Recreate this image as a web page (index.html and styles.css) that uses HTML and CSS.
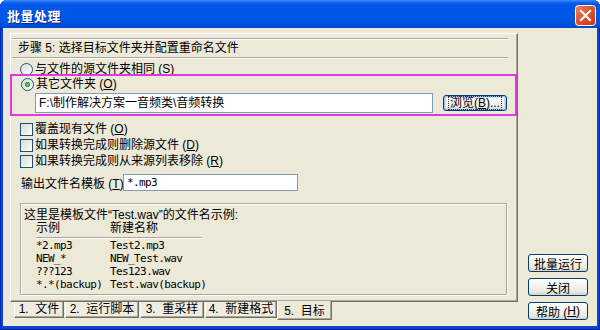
FILE: index.html
```html
<!DOCTYPE html>
<html lang="zh-CN">
<head>
    <meta charset="UTF-8">
    <meta name="viewport" content="width=device-width, initial-scale=1.0">
    <title>批量处理</title>
    <link rel="stylesheet" href="styles.css">
</head>
<body>
    <div class="window">
        <div class="titlebar">
            <span class="title">批量处理</span>
            <span class="close-btn">
                <svg width="21" height="21" viewBox="0 0 21 21">
                    <defs>
                        <linearGradient id="red" x1="0" y1="0" x2="1" y2="1">
                            <stop offset="0" stop-color="#F0896A"/>
                            <stop offset="0.45" stop-color="#E0552F"/>
                            <stop offset="1" stop-color="#C4371A"/>
                        </linearGradient>
                    </defs>
                    <rect x="0.5" y="0.5" width="20" height="20" rx="3" fill="url(#red)" stroke="#fff"/>
                    <path d="M6 6 L15 15 M15 6 L6 15" stroke="#fff" stroke-width="2.2" stroke-linecap="square"/>
                </svg>
            </span>
        </div>

        <div class="client">
            <div class="main">
                <div class="pane">
                    <div class="step">步骤 5: 选择目标文件夹并配置重命名文件</div>

                    <div class="opt first"><span class="radio"></span>与文件的源文件夹相同 (<u>S</u>)</div>

                    <!-- 高亮框 -->
                    <div class="highlight">
                        <div class="opt"><span class="radio checked"></span>其它文件夹 (<u>O</u>)</div>
                        <div class="path-row">
                            <div class="field path">F:\制作解决方案一音频类\音频转换</div>
                            <button class="btn browse"><span class="focus">浏览(<u>B</u>)...</span></button>
                        </div>
                    </div>

                    <div class="checks">
                        <div class="opt"><span class="check"></span>覆盖现有文件 (<u>O</u>)</div>
                        <div class="opt"><span class="check"></span>如果转换完成则删除源文件 (<u>D</u>)</div>
                        <div class="opt"><span class="check"></span>如果转换完成则从来源列表移除 (<u>R</u>)</div>
                    </div>

                    <div class="tpl-row">
                        <span class="tpl-label">输出文件名模板 (<u>T</u>)</span>
                        <div class="field tpl">*.mp3</div>
                    </div>

                    <div class="group">
                        <div class="group-title">这里是模板文件“Test.wav”的文件名示例:</div>
                        <div class="ex-head"><span>示例</span><span>新建名称</span></div>
                        <div class="ex-line"></div>
                        <div class="ex-row"><span>*2.mp3</span><span>Test2.mp3</span></div>
                        <div class="ex-row"><span>NEW_*</span><span>NEW_Test.wav</span></div>
                        <div class="ex-row"><span>???123</span><span>Tes123.wav</span></div>
                        <div class="ex-row"><span>*.*(backup)</span><span>Test.wav(backup)</span></div>
                    </div>
                </div>

                <div class="tabs">
                    <div class="tab t1">1.&nbsp; 文件</div>
                    <div class="tab t2">2.&nbsp; 运行脚本</div>
                    <div class="tab t3">3.&nbsp; 重采样</div>
                    <div class="tab t4">4.&nbsp; 新建格式</div>
                    <div class="tab t5 active">5.&nbsp; 目标</div>
                </div>
            </div>

            <div class="side">
                <button class="btn">批量运行</button>
                <button class="btn">关闭</button>
                <button class="btn">帮助 (<u>H</u>)</button>
            </div>
        </div>
    </div>
</body>
</html>
```

FILE: styles.css
```css
body {
    margin: 0;
    background: #fff;
    font-family: "Liberation Sans", "Noto Sans CJK SC", sans-serif;
    font-size: 12px;
    color: #000;
}

.window {
    width: 600px;
    height: 330px;
    display: flex;
    flex-direction: column;
    background: #0845D6;
    border-radius: 7px 7px 0 0;
    overflow: hidden;
    box-shadow: inset 1px 0 #0025B0, inset -1px 0 #0025B0, inset 0 -1px #001A8C;
}

.titlebar {
    flex: none;
    height: 28px;
    display: flex;
    align-items: center;
    justify-content: space-between;
    padding: 2px 4px 0 7px;
    box-sizing: border-box;
    background: linear-gradient(180deg, #3D8DF5 0, #0B5CEC 3px, #0056E6 6px, #0058EA 16px, #0052DE 24px, #0046C8 28px);
}

.title {
    color: #fff;
    font-family: "Noto Sans CJK SC", sans-serif;
    font-weight: bold;
    font-size: 13px;
    letter-spacing: 0.5px;
    text-shadow: 1px 1px #0A2A8C;
}

.close-btn svg {
    display: block;
}

.client {
    flex: 1;
    margin: 0 3px 4px 3px;
    background: #ECE9D8;
    display: flex;
}

.main {
    width: 508px;
    margin: 5px 0 0 7px;
}

.pane {
    height: 269px;
    box-sizing: border-box;
    border: 1px solid;
    border-color: #fff #716F64 #716F64 #fff;
    box-shadow: inset -1px -1px #ACA899;
    padding-top: 4px;
}

.step {
    margin: 0 9px 0 1px;
    height: 18px;
    line-height: 18px;
    padding-left: 6px;
    border-top: 1px solid #ACA899;
    border-bottom: 1px solid #ACA899;
    box-shadow: inset 0 1px #fff, 0 1px #fff;
}

.opt {
    display: flex;
    align-items: center;
    height: 16px;
    line-height: 13px;
    padding-left: 9px;
    white-space: nowrap;
}

.opt.first {
    height: 13px;
    margin-top: 5px;
}

u {
    text-underline-offset: 1px;
}

.radio,
.check {
    flex: none;
    width: 13px;
    height: 13px;
    box-sizing: border-box;
    border: 1px solid #1C5180;
    background: linear-gradient(135deg, #DCDBD3 0%, #F4F4F0 70%, #fff 100%);
    margin-right: 2px;
}

.radio {
    border-radius: 50%;
}

.radio.checked {
    background: radial-gradient(circle at 50% 50%, #6CE068 0, #21A121 2.4px, transparent 3px),
                linear-gradient(135deg, #DCDBD3 0%, #F4F4F0 70%, #fff 100%);
}

/* kotak magenta di atas panel */
.highlight {
    position: relative;
    margin: -2px 0 0 -1px;
    border: 2px solid #DD3ADD;
    height: 38px;
}

.path-row {
    display: flex;
    align-items: center;
    gap: 10px;
    margin-top: 1px;
    padding-left: 23px;
}

.field {
    box-sizing: border-box;
    border: 1px solid #7F9DB9;
    background: #fff;
    padding-left: 3px;
    white-space: nowrap;
}

.path {
    width: 398px;
    height: 20px;
    line-height: 18px;
}

.btn {
    box-sizing: border-box;
    padding: 0;
    font-family: inherit;
    font-size: 12px;
    color: #000;
    border: 1px solid #003C74;
    border-radius: 3px;
    background: linear-gradient(180deg, #fff 0%, #F6F5F1 35%, #ECEBE5 75%, #D8D3C8 100%);
    display: flex;
    align-items: center;
    justify-content: center;
    white-space: nowrap;
}

.browse {
    width: 64px;
    height: 16px;
    box-shadow: inset 0 0 0 1px #A6C2F0, inset 0 0 0 2px #CEDCF6;
}

.browse .focus {
    outline: 1px dotted #333;
    line-height: 10px;
    padding: 1px 1px;
}

.checks {
    margin-top: 5px;
}

.tpl-row {
    display: flex;
    align-items: center;
    height: 17px;
    margin-top: 5px;
    padding-left: 10px;
}

.tpl-label {
    width: 102px;
    white-space: nowrap;
}

.tpl {
    width: 175px;
    height: 17px;
    line-height: 15px;
    font-family: "DejaVu Sans Mono", monospace;
    font-size: 11px;
    letter-spacing: -0.6px;
}

.group {
    margin: 12px 0 0 9px;
    width: 487px;
    height: 92px;
    box-sizing: border-box;
    border: 1px solid #ACA899;
    box-shadow: 1px 1px 0 #fff, inset 1px 1px 0 #fff;
    padding: 5px 0 0 3px;
}

.group-title,
.ex-head {
    height: 13px;
    line-height: 13px;
    white-space: nowrap;
}

.ex-head,
.ex-row {
    display: flex;
    padding-left: 12px;
}

.ex-head span:first-child,
.ex-row span:first-child {
    width: 74px;
}

.ex-line {
    margin: 2px 0 1px 12px;
    width: 166px;
    height: 1px;
    background: #ACA899;
    box-shadow: 0 1px #fff;
}

.ex-row {
    height: 13px;
    line-height: 13px;
    font-family: "DejaVu Sans Mono", monospace;
    font-size: 11px;
    letter-spacing: -0.6px;
    white-space: pre;
}

.tabs {
    display: flex;
    align-items: flex-start;
    gap: 1px;
    padding-left: 4px;
}

.tab {
    height: 16px;
    box-sizing: border-box;
    line-height: 15px;
    text-align: center;
    white-space: nowrap;
    border-left: 1px solid #fff;
    border-right: 1px solid #716F64;
    border-bottom: 1px solid #716F64;
    box-shadow: inset -1px -1px #ACA899;
    background: #EFEDE2;
}

.t1 { width: 50px; }
.t2 { width: 74px; }
.t3 { width: 64px; }
.t4 { width: 72px; }
.t5 { width: 55px; }

.tab.active {
    height: 19px;
    margin: -1px 0 0 -1px;
    line-height: 20px;
    background: #ECE9D8;
}

.side {
    flex: 1;
    display: flex;
    flex-direction: column;
    justify-content: flex-end;
    gap: 6px;
    padding: 0 0 6px 10px;
}

.side .btn {
    width: 60px;
    height: 18px;
}
```
